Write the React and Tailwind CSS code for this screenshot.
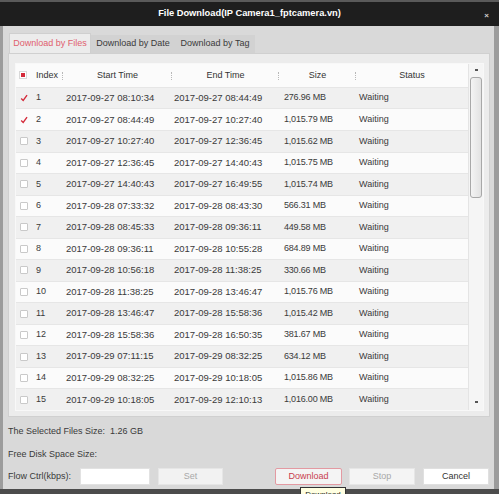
import React from 'react';

const files = [
  ['1', '2017-09-27 08:10:34', '2017-09-27 08:44:49', '276.96 MB', true],
  ['2', '2017-09-27 08:44:49', '2017-09-27 10:27:40', '1,015.79 MB', true],
  ['3', '2017-09-27 10:27:40', '2017-09-27 12:36:45', '1,015.62 MB', false],
  ['4', '2017-09-27 12:36:45', '2017-09-27 14:40:43', '1,015.75 MB', false],
  ['5', '2017-09-27 14:40:43', '2017-09-27 16:49:55', '1,015.74 MB', false],
  ['6', '2017-09-28 07:33:32', '2017-09-28 08:43:30', '566.31 MB', false],
  ['7', '2017-09-28 08:45:33', '2017-09-28 09:36:11', '449.58 MB', false],
  ['8', '2017-09-28 09:36:11', '2017-09-28 10:55:28', '684.89 MB', false],
  ['9', '2017-09-28 10:56:18', '2017-09-28 11:38:25', '330.66 MB', false],
  ['10', '2017-09-28 11:38:25', '2017-09-28 13:46:47', '1,015.76 MB', false],
  ['11', '2017-09-28 13:46:47', '2017-09-28 15:58:36', '1,015.42 MB', false],
  ['12', '2017-09-28 15:58:36', '2017-09-28 16:50:35', '381.67 MB', false],
  ['13', '2017-09-29 07:11:15', '2017-09-29 08:32:25', '634.12 MB', false],
  ['14', '2017-09-29 08:32:25', '2017-09-29 10:18:05', '1,015.86 MB', false],
  ['15', '2017-09-29 10:18:05', '2017-09-29 12:10:13', '1,016.00 MB', false],
];

const RedCheck = () => (
  <svg width="8" height="8" viewBox="0 0 10 10">
    <path d="M1.5 5.5 L4 8 L8.8 1.5" fill="none" stroke="#d42a3a" strokeWidth="1.7" />
  </svg>
);

const Box = () => (
  <span className="block w-[8px] h-[8px] border border-[#c9c9c9] bg-white rounded-[1px]" />
);

const Sep = () => (
  <span className="absolute right-0 top-[8px] h-[8px] border-r border-dotted border-[#b8b8b8]" />
);

const App = () => {
  return (
    <div
      className="relative w-[499px] h-[494px] overflow-hidden bg-[#4c4c4c] text-[9px] text-[#3a3a3a]"
      style={{ fontFamily: '"Liberation Sans", Arial, sans-serif' }}
    >
      <div className="h-[489px] flex flex-col bg-[#9c9c9c] pl-[3px] pr-[5px]">
        {/* Title bar */}
        <div className="h-[26px] -mx-[3px] -mr-[5px] flex items-center justify-center bg-[#1e1e1e] border-t-2 border-[#5a5a5a] relative">
          <span className="text-white font-bold text-[9.3px]">File Download(IP Camera1_fptcamera.vn)</span>
          <span className="absolute right-[10px] top-[8px] text-[#cfcfcf] text-[8px] font-bold">×</span>
        </div>

        <div className="flex-1 bg-[#d9d9d9] pl-[5px] pr-[4px] pt-[7px] flex flex-col">
          {/* Tabs */}
          <div className="flex h-[20px] items-end">
            <div className="h-[20px] w-[82px] flex items-center justify-center bg-[#ececec] text-[#e0606e] border border-b-0 border-[#cfcfcf] ml-[1px]">
              Download by Files
            </div>
            <div className="h-[18px] w-[84px] flex items-center justify-center bg-[#d2d2d2] text-[#3a3a3a]">
              Download by Date
            </div>
            <div className="h-[18px] w-[80px] flex items-center justify-center bg-[#d2d2d2] text-[#3a3a3a]">
              Download by Tag
            </div>
          </div>

          {/* Panel */}
          <div className="h-[364px] w-[482px] bg-[#ececec] border border-[#d0d0d0] pt-[9px] pl-[6px]">
            <div className="w-[469px] h-[348px] border border-[#f8f8f8] bg-white flex">
              <div className="w-[452px] flex flex-col">
                {/* Header */}
                <div className="h-[23px] flex items-center bg-[#fbfbfb] text-[#333]">
                  <div className="relative w-[47px] h-full flex items-center">
                    <span className="ml-[3px] w-[8px] h-[8px] flex items-center justify-center border border-[#d8d8d8] bg-white">
                      <span className="w-[4px] h-[4px] bg-[#d42a3a]" />
                    </span>
                    <span className="ml-[9px]">Index</span>
                    <Sep />
                  </div>
                  <div className="relative w-[109px] h-full flex items-center justify-center">
                    Start Time
                    <Sep />
                  </div>
                  <div className="relative w-[107px] h-full flex items-center justify-center">
                    End Time
                    <Sep />
                  </div>
                  <div className="relative w-[77px] h-full flex items-center justify-center">
                    Size
                    <Sep />
                  </div>
                  <div className="w-[112px] h-full flex items-center justify-center">Status</div>
                </div>

                {files.map(([idx, start, end, size, checked], i) => (
                  <div
                    key={idx}
                    className={
                      'h-[21.6px] flex items-center border-t border-[#e6e6e6] ' +
                      (i % 2 === 0 ? 'bg-[#f0f0f0]' : 'bg-[#fbfbfb]')
                    }
                  >
                    <div className="w-[47px] flex items-center">
                      <span className="ml-[3px] w-[9px] flex items-center justify-center">
                        {checked ? <RedCheck /> : <Box />}
                      </span>
                      <span className="ml-[8px]">{idx}</span>
                    </div>
                    <div className="w-[109px] pl-[3px] text-[9.5px]">{start}</div>
                    <div className="w-[107px] pl-[2px] text-[9.5px]">{end}</div>
                    <div className="w-[77px] pl-[5px] tracking-[-0.2px]">{size}</div>
                    <div className="w-[112px] pl-[3px]">Waiting</div>
                  </div>
                ))}
              </div>

              {/* Scrollbar */}
              <div className="w-[16px] bg-[#f5f5f5] border-l border-[#e4e4e4] flex flex-col items-center">
                <span className="mt-[5px] w-[3px] h-[2px] bg-[#555]" />
                <div className="mt-[6px] w-[12px] h-[121px] rounded-[3px] border border-[#a8a8a8] bg-gradient-to-r from-[#f4f4f4] to-[#e2e2e2]" />
                <div className="flex-1" />
                <span className="mb-[7px] w-[3px] h-[2px] bg-[#555]" />
              </div>
            </div>
          </div>

          {/* Bottom info */}
          <div className="h-[12px] mt-[9px] flex items-center">
            The Selected Files Size:&nbsp;&nbsp;1.26 GB
          </div>
          <div className="h-[12px] mt-[11px] flex items-center">Free Disk Space Size:</div>
          <div className="mt-[7px] h-[17px] flex items-center">
            <span className="w-[72px]">Flow Ctrl(kbps):</span>
            <div className="w-[70px] h-[17px] bg-white border border-[#e2e2e2]" />
            <button className="ml-[8px] w-[65px] h-[17px] bg-[#f2f2f2] border border-[#e6e6e6] text-[#a8a8a8]">
              Set
            </button>
            <button className="ml-[52px] w-[67px] h-[17px] bg-[#f4f4f4] border border-[#e39aa2] rounded-[2px] text-[#c8404e]">
              Download
            </button>
            <button className="ml-[7px] w-[66px] h-[17px] bg-[#f4f4f4] border border-[#e6e6e6] text-[#a8a8a8]">
              Stop
            </button>
            <button className="ml-[8px] w-[66px] h-[17px] bg-white border border-[#e0e0e0] text-[#333]">
              Cancel
            </button>
          </div>
        </div>
      </div>

      {/* Tooltip */}
      <div className="absolute left-[300px] top-[487px] w-[46px] h-[14px] bg-[#ffffe1] border border-[#333] text-[8px] text-[#222] flex items-start justify-center pt-[1px]">
        Download
      </div>
    </div>
  );
};

export default App;
